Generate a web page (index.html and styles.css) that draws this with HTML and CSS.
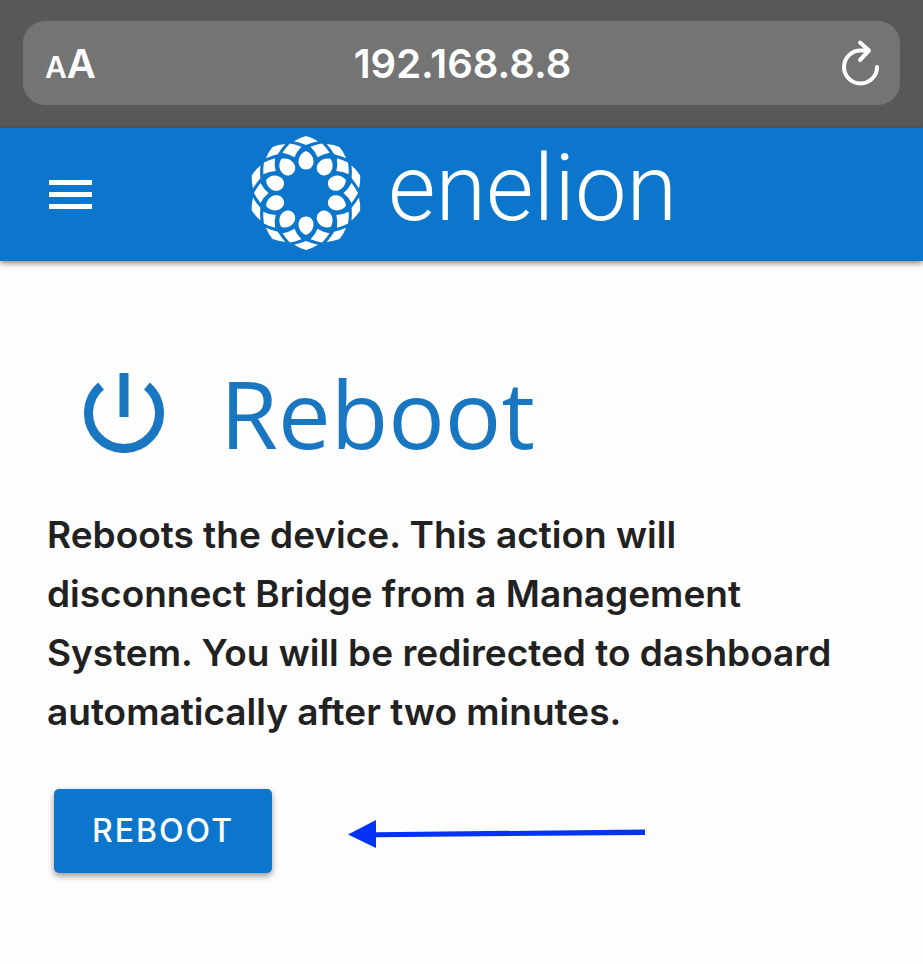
FILE: index.html
```
<!DOCTYPE html>
<html lang="en">
<head>
    <meta charset="UTF-8">
    <meta name="viewport" content="width=device-width, initial-scale=1.0">
    <title>Reboot - enelion</title>
    <link rel="stylesheet" href="styles.css">
</head>
<body>

    <!-- Browser bar -->
    <div class="browser">
        <div class="address-bar">
            <button class="text-size" aria-label="Text size"><small>A</small>A</button>
            <a class="address" href="#">192.168.8.8</a>
            <button class="reload" aria-label="Reload">
                <svg width="40" height="48" viewBox="0 0 40 48" fill="none" stroke="#fff" stroke-width="4" stroke-linecap="round" stroke-linejoin="round">
                    <path d="M37 28A16.500 16.500 0 1 1 20.500 11.500H28"/>
                    <path d="M20 3.500L29 11.500L20 21"/>
                </svg>
            </button>
        </div>
    </div>

    <!-- Header -->
    <header>
        <button class="menu" aria-label="Menu">
            <svg width="44" height="30" viewBox="0 0 44 30" fill="#fff">
                <path d="M1 0H44V5H1ZM1 12H44V17H1ZM1 24H44V29H1Z"/>
            </svg>
        </button>
        <a class="brand" href="#">
            <svg width="116" height="116" viewBox="-58 -58 116 116" fill="#fff">
                <defs>
                    <g id="petal">
                        <path d="M0-42C4-40.500 7.500-36.500 7.500-31.500C7.500-27 4.500-23.500 0-23.500C-4.500-23.500-7.500-27-7.500-31.500C-7.500-36.500-4-40.500 0-42Z"/>
                        <path d="M0-57Q6-55.500 12-51.800Q6-50.500 0-48Q-6-50.500-12-51.800Q-6-55.500 0-57Z"/>
                        <path transform="rotate(18)" d="M0-52Q5-49.500 10-45.500Q4-42.500 0-37.500Q-4-42.500-10-45.500Q-5-49.500 0-52Z"/>
                    </g>
                </defs>
                <use href="#petal"/>
                <use href="#petal" transform="rotate(36)"/>
                <use href="#petal" transform="rotate(72)"/>
                <use href="#petal" transform="rotate(108)"/>
                <use href="#petal" transform="rotate(144)"/>
                <use href="#petal" transform="rotate(180)"/>
                <use href="#petal" transform="rotate(216)"/>
                <use href="#petal" transform="rotate(252)"/>
                <use href="#petal" transform="rotate(288)"/>
                <use href="#petal" transform="rotate(324)"/>
            </svg>
            <span>enelion</span>
        </a>
    </header>

    <!-- Reboot Section -->
    <main>
        <div class="title">
            <svg width="80" height="80" viewBox="0 0 80 80" fill="none" stroke="#1976c0" stroke-width="9">
                <path d="M40 0V44"/>
                <path d="M17 13A35.500 35.500 0 1 0 63 13"/>
            </svg>
            <h1>Reboot</h1>
        </div>
        <p>Reboots the device. This action will disconnect Bridge from a Management System. You will be redirected to dashboard automatically after two minutes.</p>
        <div class="actions">
            <button class="button">REBOOT</button>
            <svg width="297" height="34" viewBox="0 -6 297 34" fill="#0433f5">
                <path d="M0 14.500L28 0V12.200L297 9.500V15L28 17.200V28Z"/>
            </svg>
        </div>
    </main>

</body>
</html>
```
FILE: styles.css
```
body {
    font-family: Inter, "Liberation Sans", sans-serif;
    margin: 0;
    background-color: #fdfdfd;
    color: #212121;
}
button {
    font-family: inherit;
    border: none;
    padding: 0;
    background: none;
    color: white;
    cursor: pointer;
}
svg {
    display: block;
    flex-shrink: 0;
}
.browser {
    background-color: #585858;
    padding: 21px 23px 23px;
}
.address-bar {
    display: grid;
    grid-template-columns: 1fr auto 1fr;
    align-items: center;
    height: 84px;
    padding: 0 20px 0 22px;
    border-radius: 22px;
    background-color: #747474;
}
.text-size {
    justify-self: start;
    font-size: 40px;
    font-weight: 600;
}
.text-size small {
    font-size: 30px;
}
.address {
    color: white;
    font-size: 40px;
    font-weight: 600;
    text-decoration: none;
}
.reload {
    justify-self: end;
}
header {
    display: grid;
    grid-template-columns: 1fr auto 1fr;
    align-items: center;
    height: 133px;
    padding: 0 48px;
    background-color: #0b76cb;
    box-shadow: 0 2px 6px rgba(0, 0, 0, 0.5);
}
.menu {
    justify-self: start;
}
.brand {
    display: flex;
    align-items: flex-start;
    gap: 24px;
    padding: 0 0 4px 2px;
    color: white;
    font-family: Roboto, sans-serif;
    font-size: 92px;
    font-weight: 300;
    line-height: 108px;
    text-decoration: none;
}
main {
    padding: 96px 47px;
}
.title {
    display: flex;
    align-items: center;
    gap: 56px;
    padding: 0 37px;
    color: #1976c0;
}
h1 {
    margin: 0;
    font-family: "Open Sans", sans-serif;
    font-size: 94px;
    font-weight: 400;
    line-height: 112px;
}
p {
    margin: 36px 0 48px;
    font-size: 37px;
    font-weight: 600;
    line-height: 59px;
}
.actions {
    display: flex;
    align-items: center;
    gap: 76px;
    padding: 0 7px;
}
.button {
    padding: 0 38px;
    border-radius: 5px;
    background-color: #0b76cb;
    font-size: 32px;
    font-weight: 500;
    line-height: 84px;
    letter-spacing: 2px;
    box-shadow: 0 3px 6px rgba(0, 0, 0, 0.4);
}
```
